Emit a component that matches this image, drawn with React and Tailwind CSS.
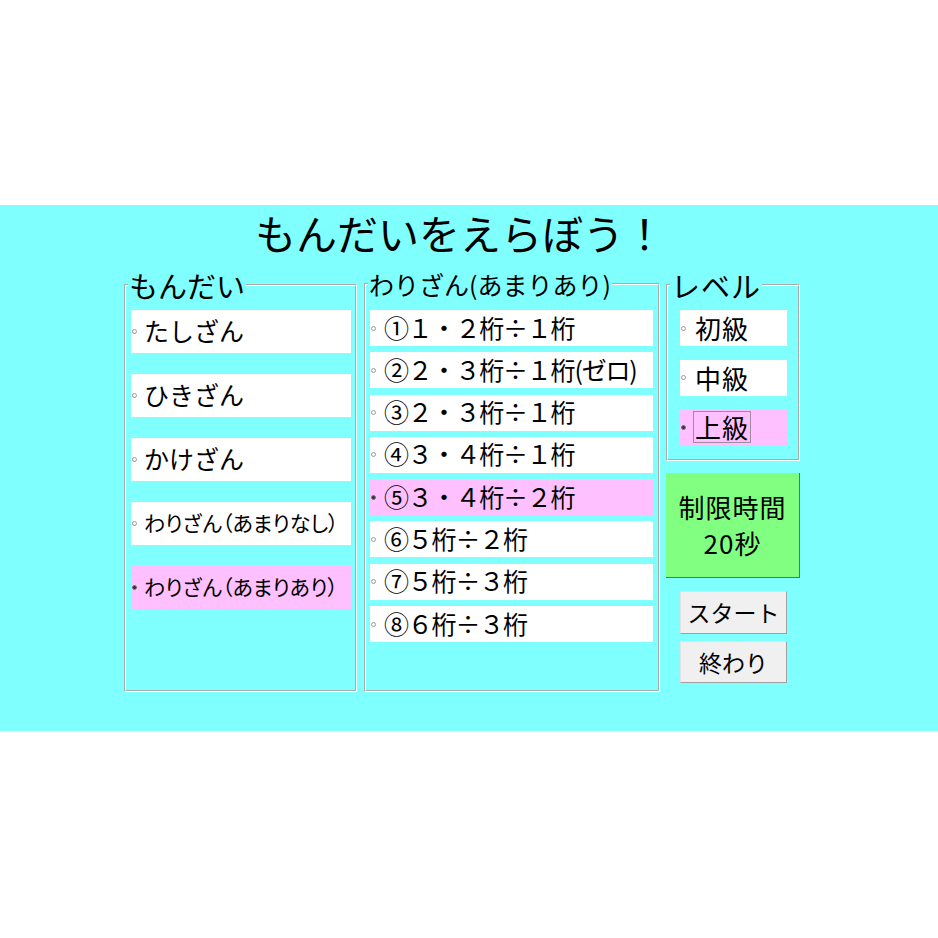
import React from 'react';

const mondai = [
  { label: 'たしざん', big: true },
  { label: 'ひきざん', big: true },
  { label: 'かけざん', big: true },
  { label: 'わりざん（あまりなし）', big: false },
  { label: 'わりざん（あまりあり）', big: false, on: true },
];

const kinds = [
  '①１・２桁÷１桁',
  '②２・３桁÷１桁(ゼロ)',
  '③２・３桁÷１桁',
  '④３・４桁÷１桁',
  '⑤３・４桁÷２桁',
  '⑥５桁÷２桁',
  '⑦５桁÷３桁',
  '⑧６桁÷３桁',
];

const levels = ['初級', '中級', '上級'];

const Dot = ({ on }) => (
  <span
    className={`w-[5px] h-[5px] rounded-full border shrink-0 ${
      on ? 'border-[#777] bg-[#333]' : 'border-[#9a9a9a] bg-white'
    }`}
  />
);

const Group = ({ title, className, legendClass, children }) => (
  <fieldset
    className={`m-0 p-0 border-2 [border-style:groove] border-white shrink-0 ${className}`}
  >
    <legend className={`ml-[2px] px-[1px] ${legendClass}`}>{title}</legend>
    {children}
  </fieldset>
);

export default function App() {
  return (
    <div className="min-h-screen bg-white pt-[205px] text-black font-['Noto_Sans_CJK_JP','Noto_Sans_CJK_SC',sans-serif]">
      <div className="bg-[#80ffff] h-[526px]">
        <div className="h-[63px] pt-[7px] pl-[255px] text-[41px] leading-[41px]">
          もんだいをえらぼう！
        </div>

        <div className="flex items-start pl-[124px]">
          {/* もんだい */}
          <Group title="もんだい" className="w-[233px] h-[424px]" legendClass="text-[29px] leading-[34px]">
            <div className="flex flex-col gap-[21px] pt-[8px] pl-[5px]">
              {mondai.map((m) => (
                <div
                  key={m.label}
                  className={`w-[220px] h-[43px] flex items-center pl-[1px] ${m.on ? 'bg-[#ffc0ff]' : 'bg-white'}`}
                >
                  <Dot on={m.on} />
                  <span
                    className={`ml-[7px] leading-none whitespace-nowrap -mt-[2px] ${
                      m.big ? 'text-[25px]' : 'text-[21px] [font-feature-settings:"palt"]'
                    }`}
                  >
                    {m.label}
                  </span>
                </div>
              ))}
            </div>
          </Group>

          {/* 種類 */}
          <Group
            title="わりざん(あまりあり)"
            className="ml-[7px] w-[296px] h-[424px]"
            legendClass="text-[25px] leading-[32px]"
          >
            <div className="flex flex-col gap-[6.3px] pt-[10px] pl-[4px]">
              {kinds.map((k, i) => (
                <div
                  key={k}
                  className={`w-[283px] h-[36px] flex items-center pl-[1px] ${i === 4 ? 'bg-[#ffc0ff]' : 'bg-white'}`}
                >
                  <Dot on={i === 4} />
                  <span className="ml-[8px] -mt-[2px] text-[25px] tracking-[-1.2px] leading-none whitespace-nowrap">{k}</span>
                </div>
              ))}
            </div>
          </Group>

          {/* レベル */}
          <div className="ml-[6px] w-[134px] flex flex-col">
            <Group title="レベル" className="w-[134px] h-[193px]" legendClass="text-[29px] tracking-[1px] leading-[34px]">
              <div className="flex flex-col gap-[13.5px] pt-[8px] pl-[12px]">
                {levels.map((l, i) => (
                  <div
                    key={l}
                    className={`w-[107px] h-[36px] flex items-center pl-[1px] ${i === 2 ? 'bg-[#ffc0ff]' : 'bg-white'}`}
                  >
                    <Dot on={i === 2} />
                    <span
                      className={`ml-[7px] text-[26px] tracking-[1px] leading-none px-[1px] py-[2px] border ${
                        i === 2 ? 'border-[#a08aa0]' : 'border-transparent'
                      }`}
                    >
                      {l}
                    </span>
                  </div>
                ))}
              </div>
            </Group>

            <div className="mt-[12px] h-[105px] bg-[#80ff80] border-r border-b border-[#6a6a6a] flex flex-col items-center justify-center text-[26px] tracking-[1px] leading-[36px]">
              <span>制限時間</span>
              <span>20秒</span>
            </div>

            <button className="mt-[13px] ml-[14px] w-[107px] h-[43px] bg-[#f0f0f0] border border-t-[#e3e3e3] border-l-[#e3e3e3] border-r-[#a0a0a0] border-b-[#a0a0a0] text-[23px] leading-none">
              スタート
            </button>
            <button className="mt-[7px] ml-[14px] w-[107px] h-[42px] bg-[#f0f0f0] border border-t-[#e3e3e3] border-l-[#e3e3e3] border-r-[#a0a0a0] border-b-[#a0a0a0] text-[23px] leading-none">
              終わり
            </button>
          </div>
        </div>
      </div>
    </div>
  );
}
